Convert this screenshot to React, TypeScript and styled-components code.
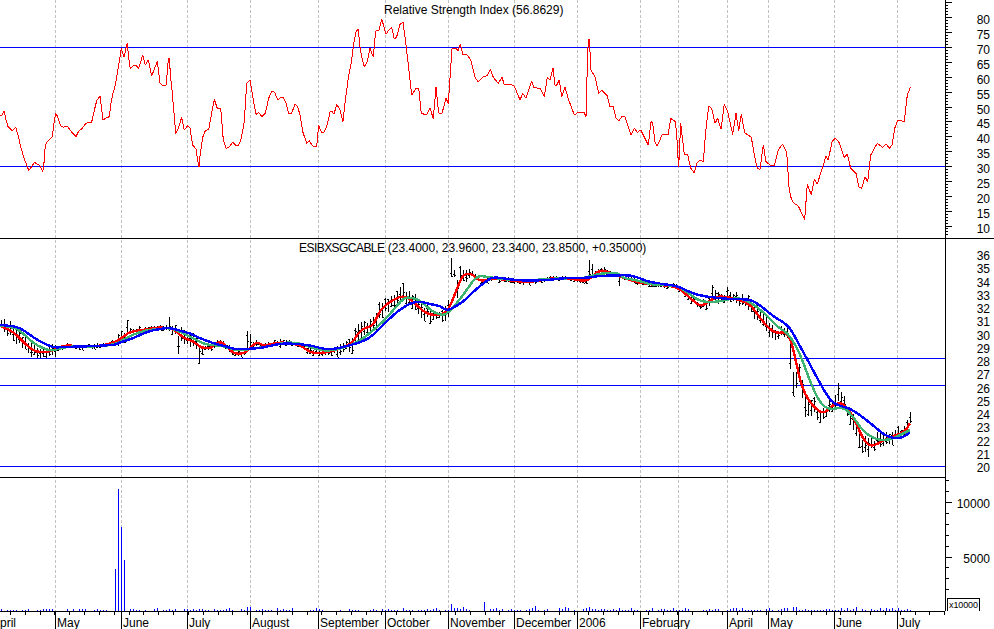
import React from "react";
import styled, { createGlobalStyle } from "styled-components";

const GlobalStyle = createGlobalStyle`
  html, body { margin: 0; padding: 0; background: #fff; }
`;

const Page = styled.main`
  width: 994px;
  height: 629px;
  overflow: hidden;
  background: #fff;
`;

const ChartSvg = styled.svg`
  display: block;
  width: 994px;
  height: 629px;
  font-family: "Liberation Sans", Arial, sans-serif;
  font-size: 12px;
`;

const Rule = styled.line<{ $color: string }>`
  stroke: ${(p) => p.$color};
  stroke-width: 1;
  shape-rendering: crispEdges;
`;

const GridLine = styled.line`
  stroke: #c0c0c0;
  stroke-width: 1;
  stroke-dasharray: 3 2;
  shape-rendering: crispEdges;
`;

const Series = styled.path<{ $color: string; $width: number }>`
  fill: none;
  stroke: ${(p) => p.$color};
  stroke-width: ${(p) => p.$width};
  shape-rendering: crispEdges;
  stroke-linejoin: round;
`;

const ChartTitle = styled.text`
  fill: #000;
  font-size: 12px;
`;

const TickerName = styled.tspan`
  letter-spacing: -0.55px;
`;

const ValueLabel = styled.text`
  fill: #000;
  font-size: 12px;
  text-anchor: end;
`;

const MonthLabel = styled.text`
  fill: #000;
  font-size: 12px;
`;

const UnitLabel = styled.text`
  fill: #000;
  font-size: 9px;
  letter-spacing: -0.1px;
`;

type Pt = [number, number];

const fromZoom = (dx: number, dy: number, a: number[]): Pt[] => {
  const out: Pt[] = [];
  for (let i = 0; i < a.length; i += 2) out.push([dx + a[i] / 3, dy + a[i + 1] / 3]);
  return out;
};

const rsi: Pt[] = [
  ...fromZoom(0, 0, [0,347,5,348,12,332,18,360,24,380,36,392,47,382,54,405,62,440,70,468,78,490,86,511,95,500,103,487,112,493,120,497,128,514,131,500,136,436,142,425,157,410,162,370,167,340,173,350,182,377,190,382,202,378,214,395,228,410,236,393,245,387,256,372,266,367,275,366,282,335,290,302,300,288,304,320,309,360,318,354,328,350,333,310,338,283,346,255,352,220,360,170,364,145,372,172,379,140,382,130,386,175,391,205,400,197,408,196,416,205,428,165,436,195,445,180,455,228,462,210,472,184,480,250,488,257,498,255,503,205,505,175,508,175,512,235,516,270,522,340,527,400,535,385,545,352,553,390,563,377,570,385,578,435,588,447,592,475,597,500,601,460,608,412,616,392,626,388,634,345,643,298,652,325,662,325,670,420,678,445,686,443,698,427,708,437,716,435,724,415,733,365,740,250,750,240,758,290,768,343,776,338,786,350,796,340,806,295,816,273,824,277,833,300,842,292,850,292,858,310,866,340,875,340,885,312,893,320,900,345,908,395,920,430,928,422,938,438,950,438,956,376,964,396,972,396,980,380,988,348]),
  ...fromZoom(330, 0, [0,335,5,333,12,343,20,313,30,330,39,365,46,300,55,235,65,180,72,125,78,95,85,88,90,140,97,180,103,200,112,185,120,145,125,160,130,170,137,93,147,90,155,58,162,80,168,103,178,88,185,83,193,117,200,110,210,73,219,66,228,135,236,205,245,285,258,265,266,265,274,340,290,345,300,325,310,355,318,262,324,320,327,340,336,340,348,295,355,310,360,235,366,147,378,145,384,152,391,132,399,165,410,163,422,180,436,235,445,245,460,230,472,227,481,208,490,232,505,250,516,232,523,254,545,254,553,258,570,300,578,280,588,295,605,243,612,263,630,265,643,290,652,232,660,240,669,205,675,255,680,255,688,240,695,290,705,262,716,300,733,345,745,337,762,337,768,350,772,195,775,118,778,118,783,210,795,230,806,280,815,270,832,287,840,320,850,320,858,355,866,363,875,350,885,350,903,405,913,385,922,397,932,390,955,435,963,365,968,370,975,425,981,437,990,420]),
  ...fromZoom(660, 0, [0,418,8,402,20,402,24,405,32,355,46,365,50,400,53,460,56,500,62,370,66,405,73,462,83,465,92,505,103,518,110,490,120,480,130,485,137,395,146,318,155,325,165,370,173,355,183,388,193,313,203,335,218,403,228,340,236,392,244,343,254,398,274,412,283,465,292,505,300,508,310,435,318,485,330,495,343,497,355,450,368,432,380,458,387,560,392,590,400,608,415,618,434,658,442,553,454,585,463,538,472,552,490,495,498,468,505,480,516,425,526,415,536,425,553,472,562,462,572,505,588,520,596,560,605,565,615,530,623,545,632,465,652,430,668,442,678,432,688,445,696,435,704,385,713,360,733,365,742,285,751,262]),
];

const blue: Pt[] = [
  ...fromZoom(0, 235, [0,270,30,272,60,278,90,300,120,320,150,333,165,338,200,335,240,335,300,332,345,330,360,322,400,310,440,290,480,282,510,278,540,287,570,295,600,310,640,325,680,335,700,342,745,342,790,338,820,330,850,325,900,327,940,333,990,347]),
  ...fromZoom(330, 235, [100,320,130,300,160,270,200,230,240,205,270,198,300,208,330,212,350,228,375,215,400,200,430,170,460,145,485,127,510,128,550,135,600,137,660,135,700,129,770,129,810,122,850,122,900,120,930,130,960,142,990,145]),
  ...fromZoom(660, 260, [0,72,50,77,80,92,120,107,180,115,230,118,270,118,300,135,340,170,385,195,410,240,440,295,480,370,510,420,530,435,570,445,600,465,640,497,680,530,720,537,750,518]),
];
const green: Pt[] = [
  ...fromZoom(0, 235, [0,272,40,275,70,295,100,325,130,340,155,348,180,340,220,333,280,335,340,330,370,315,400,298,440,285,480,282,510,278,550,295,590,315,620,330,670,332,710,348,750,342,800,335,830,328,860,322,900,325,940,340,990,350]),
  ...fromZoom(330, 235, [70,328,100,310,130,285,160,260,190,225,220,190,240,187,270,195,300,225,330,240,350,238,380,205,410,165,440,122,470,125,500,130,550,135,620,135,680,130,740,130,770,128,790,120,820,115,860,112,880,130,920,135,960,148,990,150]),
  ...fromZoom(660, 260, [0,75,50,77,80,95,120,125,170,127,230,112,270,125,320,165,350,200,385,220,420,280,450,365,480,430,510,450,550,440,580,470,610,515,650,540,690,540,720,525,750,510]),
];
const red: Pt[] = [
  ...fromZoom(0, 235, [0,272,30,285,50,300,70,320,90,340,110,350,130,352,160,347,180,335,210,330,240,337,280,335,340,325,370,305,390,290,430,285,470,277,510,279,530,290,555,312,580,318,605,340,635,340,645,325,665,320,680,335,700,355,730,357,750,340,770,320,790,332,810,328,840,322,870,325,900,330,920,345,940,355,990,352]),
  ...fromZoom(330, 235, [65,328,80,300,100,280,130,272,150,225,180,200,220,180,250,200,280,230,310,242,350,235,370,190,385,150,400,118,425,115,450,140,490,130,530,135,590,142,640,135,680,127,730,132,770,140,790,120,815,103,850,118,880,128,930,145,990,150]),
  ...fromZoom(660, 260, [0,75,50,80,80,105,120,140,140,130,170,108,210,112,270,130,300,175,330,208,350,220,385,215,405,290,425,380,450,430,490,465,520,432,550,428,580,470,610,540,635,562,670,540,710,525,735,515,750,490]),
];

const poly = (p: Pt[]) => p.map(([x, y], i) => `${i ? "L" : "M"}${x.toFixed(1)} ${y.toFixed(1)}`).join("");

const smooth = (p: Pt[]) => {
  let d = `M${p[0][0].toFixed(1)} ${p[0][1].toFixed(1)}`;
  for (let i = 1; i < p.length - 1; i++) {
    const mx = (p[i][0] + p[i + 1][0]) / 2;
    const my = (p[i][1] + p[i + 1][1]) / 2;
    d += `Q${p[i][0].toFixed(1)} ${p[i][1].toFixed(1)} ${mx.toFixed(1)} ${my.toFixed(1)}`;
  }
  const l = p[p.length - 1];
  return `${d}L${l[0].toFixed(1)} ${l[1].toFixed(1)}`;
};

const at = (p: Pt[], x: number) => {
  for (let i = 1; i < p.length; i++) {
    if (x <= p[i][0]) {
      const [a, b] = [p[i - 1], p[i]];
      return a[1] + ((b[1] - a[1]) * (x - a[0])) / (b[0] - a[0] || 1);
    }
  }
  return p[p.length - 1][1];
};

let seed = 12345;
const rnd = () => {
  seed = (seed * 1664525 + 1013904223) % 4294967296;
  return seed / 4294967296;
};

const barOverrides: Record<number, [number, number]> = {
  127: [320, 333], 169: [317, 331], 199: [346, 364], 178: [336, 354], 247: [331, 350], 250: [334, 349],
  280: [339, 348], 403: [283, 296], 400: [287, 300], 451: [258, 277], 454: [270, 277], 460: [266, 278],
  463: [270, 281], 589: [260, 277], 592: [264, 275], 619: [275, 286], 712: [285, 296], 727: [287, 298],
  790: [340, 369], 793: [372, 396], 796: [372, 388], 802: [380, 398], 805: [395, 417], 808: [398, 416],
  811: [400, 416], 817: [410, 420], 820: [412, 422], 829: [400, 412], 838: [383, 401], 841: [392, 402],
  844: [396, 410], 847: [408, 416], 850: [410, 424], 853: [414, 430], 856: [422, 436], 859: [432, 447],
  862: [440, 453], 865: [436, 452], 868: [438, 457], 871: [435, 448], 877: [432, 444], 901: [430, 439],
  904: [426, 437], 907: [420, 430], 910: [412, 423],
};

const calmRanges: [number, number, number][] = [
  [58, 115, 0.4],
  [130, 175, 0.65],
  [205, 335, 0.45],
  [470, 700, 0.42],
];

const barsPath = (() => {
  let d = "";
  for (let x = 1; x <= 910; x += 3) {
    const c = at(red, x);
    const slope = Math.abs(at(red, x + 6) - at(red, x - 6));
    const calm = calmRanges.find(([a, b]) => x >= a && x <= b)?.[2] ?? 1;
    const amp = (2.5 + rnd() * 3 + Math.min(slope * 0.25, 4)) * calm;
    const mid = c + (rnd() - 0.45) * 5 * calm;
    const ov = barOverrides[x];
    const top = Math.round(ov ? ov[0] : mid - amp);
    const bottom = Math.round(ov ? ov[1] : mid + amp);
    const open = Math.round(top + rnd() * (bottom - top));
    const close = Math.round(top + rnd() * (bottom - top));
    d += `M${x + 0.5} ${top}V${bottom}M${x - 1} ${open + 0.5}H${x + 0.5}M${x + 0.5} ${close + 0.5}H${x + 2}`;
  }
  return d;
})();

const volumeOverrides: Record<number, number> = {
  115: 569, 118: 489, 121: 527, 124: 560, 451: 604, 454: 608, 463: 607, 484: 602, 535: 606, 565: 607, 589: 607,
  793: 607, 796: 607, 856: 607, 247: 607, 250: 607,
};
const volumeGaps: Pt[] = [[55, 62], [87, 93], [107, 113], [126, 129], [147, 153], [177, 183], [210, 212], [235, 240], [298, 304], [326, 336], [360, 367], [475, 481], [640, 642], [690, 700]];
const volumePath = (() => {
  let d = "";
  for (let x = 1; x <= 910; x += 3) {
    const gap = volumeGaps.some(([a, b]) => x >= a && x <= b);
    const ov = volumeOverrides[x];
    if (ov) {
      d += `M${x + 0.5} ${ov}V611`;
      continue;
    }
    const r = rnd();
    if (gap || r < 0.16) continue;
    const h = r < 0.6 ? 1 : r < 0.88 ? 2 : 3;
    d += `M${x + 0.5} ${611 - h}V611`;
  }
  return d;
})();

const months: { x: number; label?: string; textX?: number }[] = [
  { x: 55, label: "May", textX: 57 },
  { x: 121, label: "June", textX: 123 },
  { x: 187, label: "July", textX: 189 },
  { x: 250, label: "August", textX: 252 },
  { x: 318, label: "September", textX: 320 },
  { x: 385, label: "October", textX: 387 },
  { x: 448, label: "November", textX: 450 },
  { x: 514, label: "December", textX: 516 },
  { x: 577, label: "2006", textX: 579 },
  { x: 640, label: "February", textX: 642 },
  { x: 678 },
  { x: 727, label: "April", textX: 729 },
  { x: 768, label: "May", textX: 770 },
  { x: 834, label: "June", textX: 836 },
  { x: 897, label: "July", textX: 899 },
];

const rsiY = (v: number) => 47.5 + (70 - v) * 2.975;
const priceY = (v: number) => 465.5 - (v - 20) * 13.25;

const range = (a: number, b: number, s = 1) => {
  const r: number[] = [];
  for (let v = a; v <= b; v += s) r.push(v);
  return r;
};

const axisTicks = (() => {
  let d = "";
  const tick = (y: number, len: number) => {
    d += `M945 ${Math.round(y) + 0.5}H${945 + len}`;
  };
  range(7, 85).forEach((v) => tick(rsiY(v) - 0.5, v % 5 === 0 ? 7 : 3));
  range(40, 72).forEach((h) => {
    const v = 19 + h / 2 - 1;
    if (v <= 36.6) tick(priceY(v) - 0.5, v % 1 === 0 ? 7 : 3);
  });
  [480, 491, 513, 524, 535, 546, 567, 578, 589].forEach((y) => tick(y, 4));
  [502, 557].forEach((y) => tick(y, 7));
  for (let n = 0; n <= 63; n++) {
    const x = Math.round(10 + n * 14.83) + 0.5;
    d += `M${x} 611V615`;
  }
  return d;
})();

export default function App() {
  return (
    <Page>
      <GlobalStyle />
      <ChartSvg viewBox="0 0 994 629" role="img" aria-label="ESIBXSGCABLE price chart">
        {months.map((m) => (
          <GridLine key={m.x} x1={m.x + 0.5} x2={m.x + 0.5} y1={0} y2={611} />
        ))}

        <Rule $color="#0000ff" x1={0} x2={945} y1={47.5} y2={47.5} />
        <Rule $color="#0000ff" x1={0} x2={945} y1={166.5} y2={166.5} />
        <Series $color="#ff0000" $width={1} d={poly(rsi)} />
        <ChartTitle x={384} y={14}>Relative Strength Index (56.8629)</ChartTitle>

        <Rule $color="#000" x1={0} x2={994} y1={238.5} y2={238.5} />
        <Rule $color="#0000ff" x1={0} x2={945} y1={358.5} y2={358.5} />
        <Rule $color="#0000ff" x1={0} x2={945} y1={385.5} y2={385.5} />
        <Rule $color="#0000ff" x1={0} x2={945} y1={466.5} y2={466.5} />
        <Series $color="#000" $width={1} d={barsPath} />
        <Series $color="#ff0000" $width={2.4} d={smooth(red)} />
        <Series $color="#3cb371" $width={2.4} d={smooth(green)} />
        <Series $color="#0000ff" $width={2.4} d={smooth(blue)} />
        <ChartTitle x={299} y={252}>
          <TickerName>ESIBXSGCABLE</TickerName> (23.4000, 23.9600, 23.3400, 23.8500, +0.35000)
        </ChartTitle>

        <Rule $color="#000" x1={0} x2={945} y1={477.5} y2={477.5} />
        <Series $color="#0000ff" $width={1} d={volumePath} />

        <Rule $color="#000" x1={0} x2={945} y1={611.5} y2={611.5} />
        <Rule $color="#000" x1={945.5} x2={945.5} y1={0} y2={611} />
        <Series $color="#000" $width={1} d={axisTicks} />
        {months.map((m) => (
          <Rule key={m.x} $color="#000" x1={m.x + 0.5} x2={m.x + 0.5} y1={611} y2={629} />
        ))}

        <MonthLabel x={-8} y={627}>April</MonthLabel>
        {months.filter((m) => m.label).map((m) => (
          <MonthLabel key={m.x} x={m.textX} y={627}>{m.label}</MonthLabel>
        ))}

        {range(10, 80, 5).map((v) => (
          <ValueLabel key={`r${v}`} x={990} y={rsiY(v) + 6.5}>{v}</ValueLabel>
        ))}
        {range(20, 36).map((v) => (
          <ValueLabel key={`p${v}`} x={990} y={priceY(v) + 6.5}>{v}</ValueLabel>
        ))}
        <ValueLabel x={990} y={508}>10000</ValueLabel>
        <ValueLabel x={990} y={563}>5000</ValueLabel>

        <Series $color="#000" $width={1} d="M947.5 611V598.5H979.5V611" />
        <UnitLabel x={949} y={608}>x10000</UnitLabel>
      </ChartSvg>
    </Page>
  );
}
